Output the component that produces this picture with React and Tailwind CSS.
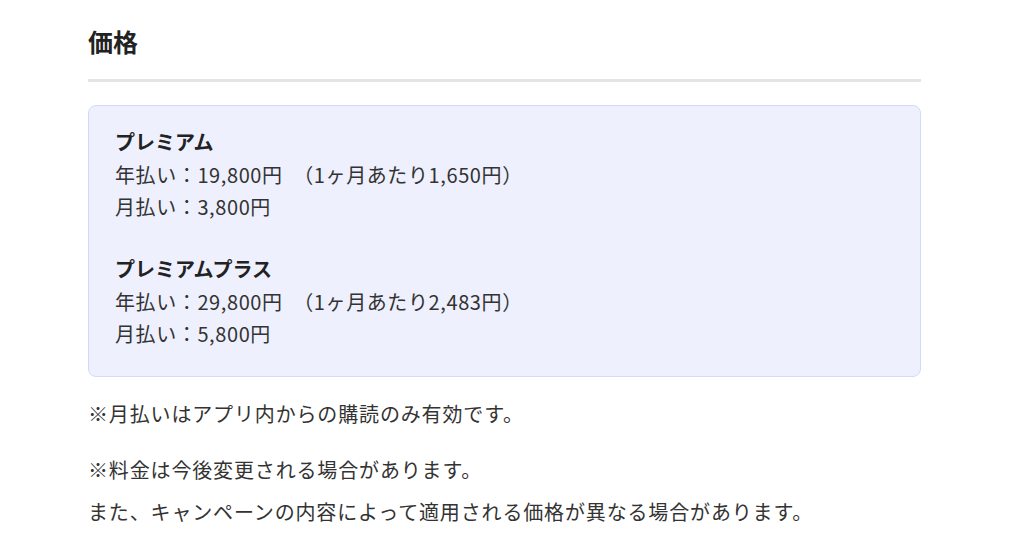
import React from 'react';

const plans = [
  { name: 'プレミアム', yearly: '19,800円', perMonth: '1,650円', monthly: '3,800円' },
  { name: 'プレミアムプラス', yearly: '29,800円', perMonth: '2,483円', monthly: '5,800円' },
];

const App = () => {
  return (
    <div
      className="min-h-[556px] bg-white text-[#333]"
      style={{ fontFamily: '"Noto Sans CJK JP", "Noto Sans", sans-serif' }}
    >
      <div className="ml-[88px] w-[833px] pt-[25px]">
        {/* Heading */}
        <h2 className="text-[25px] leading-[32px] font-bold text-[#222]">価格</h2>
        <div className="mt-[22px] h-[3px] bg-[#e4e4e4]"></div>

        {/* Price box */}
        <div className="mt-[23px] rounded-[8px] border border-[#d4d9fa] bg-[#eef0fd] pl-[26px] pt-[19px] pb-[26px]">
          {plans.map((plan, i) => (
            <div key={plan.name} className={i > 0 ? 'mt-[29px]' : ''}>
              <p className="text-[20px] leading-[33px] font-bold text-[#222]">{plan.name}</p>
              <p className="text-[20px] leading-[33px] tracking-[0.6px]">
                年払い：{plan.yearly}　（1ヶ月あたり{plan.perMonth}）
              </p>
              <p className="text-[20px] leading-[32px] tracking-[0.6px]">月払い：{plan.monthly}</p>
            </div>
          ))}
        </div>

        {/* Notes */}
        <div className="mt-[16px] text-[20px] leading-[42px] tracking-[0.85px]">
          <p>※月払いはアプリ内からの購読のみ有効です。</p>
          <p className="mt-[14px]">※料金は今後変更される場合があります。</p>
          <p>また、キャンペーンの内容によって適用される価格が異なる場合があります。</p>
        </div>
      </div>
    </div>
  );
};

export default App;
